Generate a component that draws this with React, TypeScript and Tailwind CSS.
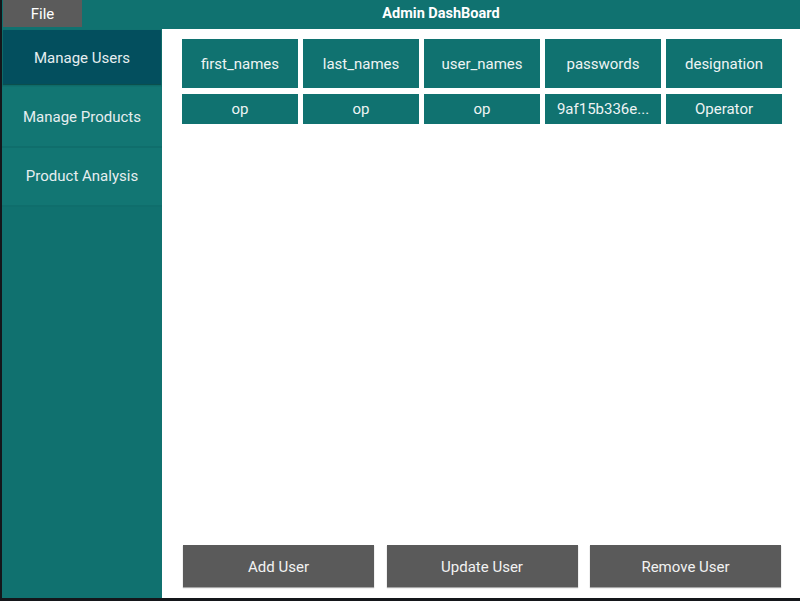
import React from "react";

const headers = ["first_names", "last_names", "user_names", "passwords", "designation"];
const row = ["op", "op", "op", "9af15b336e...", "Operator"];

export default function App() {
  return (
    <div
      className="w-[800px] h-[601px] bg-[#14161a] flex flex-col overflow-hidden"
      style={{ fontFamily: "Roboto, 'Noto Sans', sans-serif" }}
    >
      <div className="ml-[2px] w-[798px] h-[598px] flex flex-col bg-white">
        {/* Top bar */}
        <div className="h-[29px] bg-[#107270] flex items-start shrink-0">
          <div className="ml-[1px] w-[79px] h-[27px] pt-[2px] bg-[#5b5b5b] text-white text-[15px] flex items-center justify-center">
            File
          </div>
          <div className="flex-1 h-[28px] flex items-center justify-center text-white text-[14.5px] font-bold">
            Admin DashBoard
          </div>
        </div>
        {/* Body */}
        <div className="flex flex-1 min-h-0">
          <div className="w-[160px] bg-[#10716f] flex flex-col shrink-0">
            <div className="mx-[1px] mt-[1px] h-[54px] pt-[3px] bg-[#034f5e] text-[#e6eef0] text-[15px] flex items-center justify-center shadow-[0_1px_1px_rgba(0,0,0,0.3)]">
              Manage Users
            </div>
            <div className="mt-[3px] h-[61px] pt-[1px] bg-[#127673] text-[#e6eef0] text-[15px] flex items-center justify-center border-b-2 border-[#0f6e6c]">
              Manage Products
            </div>
            <div className="h-[59px] bg-[#127673] text-[#e6eef0] text-[15px] flex items-center justify-center border-b-2 border-[#0f6e6c]">
              Product Analysis
            </div>
          </div>
          <div className="flex-1 flex flex-col pl-[20px] pr-[18px] pt-[10px] pb-[11px]">
            <div className="grid grid-cols-5 gap-x-[5px] gap-y-[6px]">
              {headers.map((h) => (
                <div
                  key={h}
                  className="h-[49px] pt-[2px] bg-[#107270] text-[#eef4f4] text-[15px] flex items-center justify-center"
                >
                  {h}
                </div>
              ))}
              {row.map((c, i) => (
                <div
                  key={i}
                  className="h-[30px] bg-[#107270] text-[#eef4f4] text-[15px] flex items-center justify-center"
                >
                  {c}
                </div>
              ))}
            </div>
            <div className="flex-1" />
            <div className="flex justify-between pl-[1px] pr-[1px]">
              {["Add User", "Update User", "Remove User"].map((b) => (
                <div
                  key={b}
                  className="w-[191px] h-[42px] pt-[2px] bg-[#5a5a5a] text-[#f2f2f2] text-[15px] flex items-center justify-center shadow-[0_1px_1px_rgba(0,0,0,0.35)]"
                >
                  {b}
                </div>
              ))}
            </div>
          </div>
        </div>
      </div>
    </div>
  );
}
